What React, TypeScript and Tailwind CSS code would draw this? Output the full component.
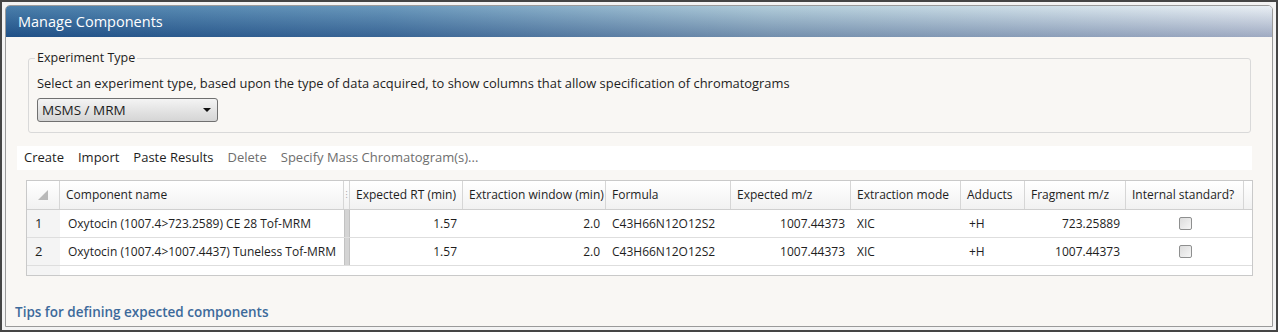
import React from 'react'

const FONT = { fontFamily: '"Open Sans", "Noto Sans", sans-serif' }

const COLS = 'grid grid-cols-[33px_284px_6px_113px_143px_125px_120px_110px_64px_101px_118px_9px]'

const ROWS = [
  { n: 1, name: 'Oxytocin (1007.4>723.2589) CE 28 Tof-MRM', frag: '723.25889' },
  { n: 2, name: 'Oxytocin (1007.4>1007.4437) Tuneless Tof-MRM', frag: '1007.44373' },
]

function HeaderCell({ children, last }: { children?: React.ReactNode; last?: boolean }) {
  return (
    <div className={`flex items-center px-[6px] whitespace-nowrap overflow-hidden ${last ? '' : 'border-r border-[#d6d6d6]'}`}>
      {children}
    </div>
  )
}

function Checkbox() {
  return (
    <span className="block w-[13px] h-[13px] border border-[#8e8f8f] rounded-[2px] bg-[linear-gradient(135deg,#dcdcdc,#f6f6f6)]" />
  )
}

export default function App() {
  return (
    <div className="w-[1280px] h-[333px] bg-white text-[12px] text-[#1e1e1e]" style={FONT}>
      <div className="w-[1278px] h-[332px] border-2 border-[#454545] p-[3px] bg-[#f3f3f3]">
        <div className="h-full flex flex-col border border-[#9a9a9a] rounded-t-[5px] bg-[#f9f7f4] overflow-hidden">
          {/* title bar */}
          <div className="h-[31px] shrink-0 flex items-center pl-[12px] text-white text-[14.5px] bg-[linear-gradient(to_bottom,rgba(255,255,255,0.15),rgba(10,30,90,0.32)),linear-gradient(to_right,#2a689c,#4f86b0_30%,#a3c3d3_60%,#e6edf3)]">
            Manage Components
          </div>

          {/* experiment type group */}
          <div className="mt-[21px] ml-[22px] mr-[21px] relative border border-[#d9d9d9] rounded-[3px] h-[75px] pt-[16px] pl-[8px]">
            <span className="absolute -top-[9px] left-[6px] px-[2px] bg-[#f9f7f4] leading-[16px] text-[12.5px]">Experiment Type</span>
            <div className="leading-[16px] text-[12.9px] whitespace-nowrap">
              Select an experiment type, based upon the type of data acquired, to show columns that allow specification of chromatograms
            </div>
            <div className="mt-[7px] w-[181px] h-[24px] flex items-center justify-between pl-[4px] pr-[5px] border border-[#707070] rounded-[3px] bg-[linear-gradient(to_bottom,#f4f4f4,#e4e4e4_50%,#d5d5d5)] text-[13.5px]">
              <span>MSMS / MRM</span>
              <span className="w-0 h-0 border-l-[4px] border-r-[4px] border-t-[4px] border-l-transparent border-r-transparent border-t-[#111] mr-[1px]" />
            </div>
          </div>

          {/* toolbar */}
          <div className="mt-[13px] ml-[11px] mr-[20px] h-[24px] bg-white flex items-center gap-[14px] pl-[7px] text-[13px]">
            <span>Create</span>
            <span>Import</span>
            <span>Paste Results</span>
            <span className="text-[#6e6e6e]">Delete</span>
            <span className="text-[#6e6e6e]">Specify Mass Chromatogram(s)...</span>
          </div>

          {/* grid */}
          <div className="mt-[10px] ml-[20px] w-[1227px] h-[96px] border border-[#c9c9c9] bg-white flex flex-col">
            <div className={`${COLS} h-[29px] shrink-0 border-b border-[#cfcfcf] bg-[linear-gradient(to_bottom,#ffffff,#f1f1f1)]`}>
              <div className="flex items-center justify-center border-r border-[#d6d6d6]">
                <svg width="12" height="12" viewBox="0 0 12 12">
                  <polygon points="11,1 11,11 1,11" fill="#b9b9b9" />
                </svg>
              </div>
              <HeaderCell>Component name</HeaderCell>
              <div className="flex items-center justify-center border-r border-[#d6d6d6] text-[8px] text-[#999]">⁝</div>
              <HeaderCell>Expected RT (min)</HeaderCell>
              <HeaderCell>Extraction window (min)</HeaderCell>
              <HeaderCell>Formula</HeaderCell>
              <HeaderCell>Expected m/z</HeaderCell>
              <HeaderCell>Extraction mode</HeaderCell>
              <HeaderCell>Adducts</HeaderCell>
              <HeaderCell>Fragment m/z</HeaderCell>
              <HeaderCell>Internal standard?</HeaderCell>
              <HeaderCell last />
            </div>
            {ROWS.map((r) => (
              <div key={r.n} className={`${COLS} h-[28px] shrink-0 border-b border-[#dedede] whitespace-nowrap`}>
                <div className="flex items-center pl-[8px] bg-[#f4f4f4] text-[13px]">{r.n}</div>
                <div className="flex items-center px-[8px]">{r.name}</div>
                <div className="bg-[#d4d4d4] border-x border-[#c2c2c2]" />
                <div className="flex items-center justify-end px-[6px]">1.57</div>
                <div className="flex items-center justify-end px-[6px]">2.0</div>
                <div className="flex items-center px-[6px]">C43H66N12O12S2</div>
                <div className="flex items-center justify-end px-[6px]">1007.44373</div>
                <div className="flex items-center px-[6px]">XIC</div>
                <div className="flex items-center px-[8px]">+H</div>
                <div className="flex items-center justify-end px-[6px]">{r.frag}</div>
                <div className="flex items-center justify-center"><Checkbox /></div>
                <div />
              </div>
            ))}
            <div className="flex-1 flex">
              <div className="w-[33px] bg-[#f4f4f4]" />
            </div>
          </div>

          {/* tips link */}
          <div className="mt-[26px] ml-[9px] text-[13.5px] font-semibold text-[#3d6a9b]">
            Tips for defining expected components
          </div>
        </div>
      </div>
    </div>
  )
}
